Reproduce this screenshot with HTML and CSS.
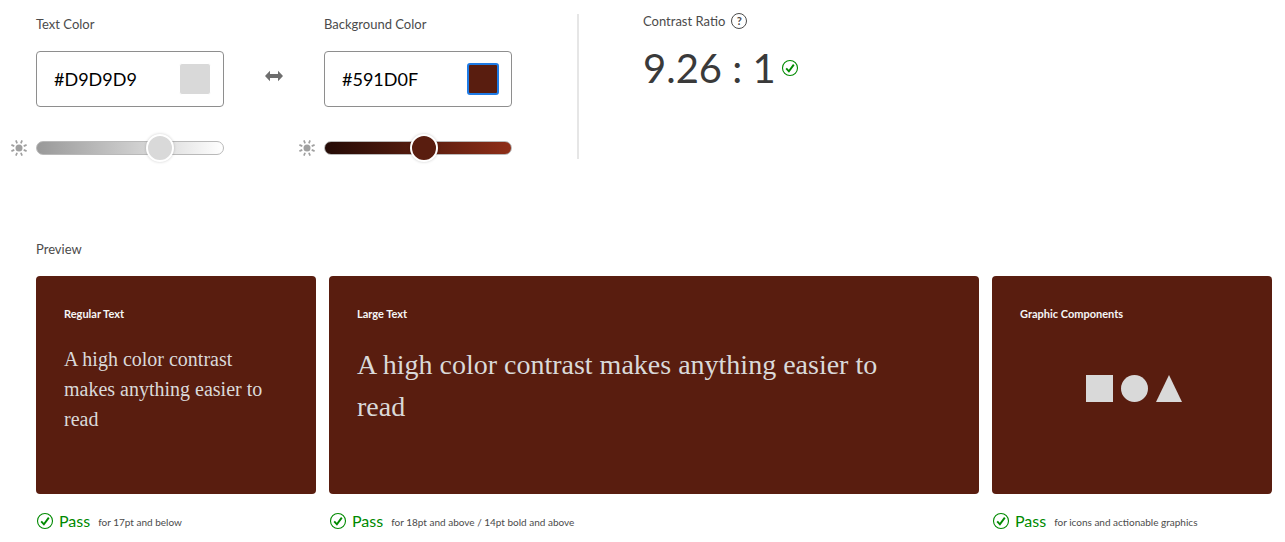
FILE: index.html
```html
<!DOCTYPE html>
<html lang="en">
<head>
<meta charset="utf-8">
<title>Contrast Checker</title>
<link rel="stylesheet" href="styles.css">
</head>
<body>
<svg class="defs" aria-hidden="true">
  <symbol id="check" viewBox="0 0 18 18">
    <circle cx="9" cy="9" r="7.5" fill="none" stroke="currentColor" stroke-width="1.1"/>
    <path d="M5.2 9.4 7.900 12.300 12.800 5.600" fill="none" stroke="currentColor" stroke-width="1.9"/>
  </symbol>
  <symbol id="sun" viewBox="0 0 16 16">
    <circle cx="8" cy="8" r="3.5" fill="currentColor"/>
    <path d="M9.900 3.300 11.100 .4M12.700 6.100 15.600 4.900M12.700 9.900 15.600 11.100M9.900 12.700 11.100 15.600M6.100 12.700 4.900 15.600M3.300 9.900 .4 11.100M3.300 6.100 .4 4.900M6.100 3.300 4.900 .4" fill="none" stroke="currentColor" stroke-width="1.7"/>
  </symbol>
</svg>
<main class="page">
  <section class="controls">
    <div class="picker">
      <label class="label" for="text-color">Text Color</label>
      <div class="field">
        <input class="hex" id="text-color" type="text" value="#D9D9D9">
        <button class="swatch swatch-text" type="button" aria-label="Pick text color"></button>
      </div>
      <svg class="sun" aria-hidden="true"><use href="#sun"/></svg>
      <input class="slider slider-text" type="range" min="0" max="100" value="69" aria-label="Text lightness">
    </div>
    <button class="swap" type="button" aria-label="Swap colors">
      <svg class="swap-icon" viewBox="0 0 18 12"><path d="M0 6 5 .8V4H13V.8L18 6 13 11.2V8H5V11.2Z" fill="#6e6e6e"/></svg>
    </button>
    <div class="picker">
      <label class="label" for="background-color">Background Color</label>
      <div class="field">
        <input class="hex" id="background-color" type="text" value="#591D0F">
        <button class="swatch swatch-background" type="button" aria-label="Pick background color"></button>
      </div>
      <svg class="sun" aria-hidden="true"><use href="#sun"/></svg>
      <input class="slider slider-background" type="range" min="0" max="100" value="54" aria-label="Background lightness">
    </div>
    <div class="result">
      <div class="result-head">
        <span>Contrast Ratio</span>
        <button class="help" type="button" aria-label="About contrast ratio">?</button>
      </div>
      <div class="ratio">9.26 : 1 <svg class="check" aria-hidden="true"><use href="#check"/></svg></div>
    </div>
  </section>

  <section class="preview">
    <h2 class="preview-title">Preview</h2>
    <div class="cards">
      <article>
        <div class="card">
          <h3 class="card-title">Regular Text</h3>
          <p class="sample">A high color contrast makes anything easier to read</p>
        </div>
        <div class="status"><svg class="check" aria-hidden="true"><use href="#check"/></svg><span class="pass">Pass</span><span class="note">for 17pt and below</span></div>
      </article>
      <article>
        <div class="card">
          <h3 class="card-title">Large Text</h3>
          <p class="sample sample-large">A high color contrast makes anything easier to read</p>
        </div>
        <div class="status"><svg class="check" aria-hidden="true"><use href="#check"/></svg><span class="pass">Pass</span><span class="note">for 18pt and above / 14pt bold and above</span></div>
      </article>
      <article>
        <div class="card">
          <h3 class="card-title">Graphic Components</h3>
          <svg class="shapes" viewBox="0 0 96 27" aria-hidden="true">
            <rect width="27" height="27"/><circle cx="48.500" cy="13.500" r="13.500"/><path d="M83 0 96 27H70Z"/>
          </svg>
        </div>
        <div class="status"><svg class="check" aria-hidden="true"><use href="#check"/></svg><span class="pass">Pass</span><span class="note">for icons and actionable graphics</span></div>
      </article>
    </div>
  </section>
</main>
</body>
</html>
```
FILE: styles.css
```css
:root {
  --text: #d9d9d9;
  --background: #591d0f;
}

* {
  box-sizing: border-box;
}

body {
  margin: 0;
  background: #fff;
  color: #4b4b4b;
  font: 13px/20px Lato, "Noto Sans", sans-serif;
}

button {
  padding: 0;
  border: 0;
  background: none;
  font: inherit;
  color: inherit;
}

.defs {
  position: absolute;
  width: 0;
  height: 0;
}

.page {
  padding: 14px 13px 0 11px;
}

.controls {
  display: flex;
  align-items: flex-start;
}

.picker {
  display: grid;
  grid-template-columns: 25px 188px;
}

.label,
.field {
  grid-column: 2;
}

.label {
  margin-bottom: 17px;
}

.field {
  display: flex;
  align-items: center;
  justify-content: space-between;
  height: 56px;
  margin-bottom: 27px;
  padding: 0 12px 0 17px;
  border: 1px solid #8e8e8e;
  border-radius: 4px;
}

.hex {
  width: 100px;
  padding: 0;
  border: 0;
  outline: 0;
  background: none;
  color: #000;
  font: 18px/24px Lato, "Noto Sans", sans-serif;
}

.swatch {
  width: 32px;
  height: 32px;
  border: 1px solid #fff;
  border-radius: 3px;
}

.swatch-text {
  background: var(--text);
}

.swatch-background {
  border: 2px solid #1e7be6;
  background: var(--background);
}

.sun {
  align-self: center;
  width: 16px;
  height: 16px;
  color: #a0a0a0;
}

.slider {
  appearance: none;
  width: 188px;
  height: 28px;
  margin: 0;
  background: none;
}

.slider::-webkit-slider-runnable-track {
  height: 14px;
  border: 1px solid #b9b9b9;
  border-radius: 7px;
}

.slider-text::-webkit-slider-runnable-track {
  background: linear-gradient(90deg, #999, #d9d9d9 64%, #fff);
}

.slider-background::-webkit-slider-runnable-track {
  background: linear-gradient(90deg, #240b06, var(--background) 53%, #8f2e18);
}

.slider::-webkit-slider-thumb {
  appearance: none;
  width: 28px;
  height: 28px;
  margin-top: -8px;
  border: 2px solid #fff;
  border-radius: 50%;
  box-shadow: 0 0 3px rgb(0 0 0 / 20%);
}

.slider-text::-webkit-slider-thumb {
  background: var(--text);
}

.slider-background::-webkit-slider-thumb {
  background: var(--background);
}

.swap {
  display: flex;
  width: 75px;
  margin-top: 56px;
  padding-left: 41px;
}

.swap-icon {
  width: 18px;
  height: 12px;
}

.result {
  min-height: 145px;
  margin-left: 65px;
  padding-left: 64px;
  border-left: 2px solid #e6e6e6;
}

.result-head {
  display: flex;
  align-items: center;
  gap: 6px;
  height: 14px;
}

.help {
  width: 16px;
  height: 16px;
  border: 1px solid #4b4b4b;
  border-radius: 50%;
  font-size: 11px;
  font-weight: 700;
  line-height: 14px;
}

.ratio {
  display: flex;
  align-items: center;
  gap: 5px;
  margin-top: 10px;
  color: #3a3a3a;
  font-size: 40px;
  line-height: 60px;
}

.check {
  flex: none;
  width: 18px;
  height: 18px;
  color: #008a00;
}

.preview {
  padding: 77px 0 0 25px;
}

.preview-title {
  margin: 0;
  font-size: 13px;
  font-weight: 400;
}

.cards {
  display: grid;
  grid-template-columns: 280px 1fr 280px;
  gap: 13px;
  margin-top: 17px;
}

.card {
  min-height: 218px;
  padding: 28px;
  border-radius: 4px;
  background: var(--background);
  color: var(--text);
}

.card-title {
  margin: 0;
  color: #f5f5f5;
  font-size: 11px;
  font-weight: 700;
}

.sample {
  margin: 20px 0 0;
  font: 20px/30px "Liberation Serif", serif;
}

.sample-large {
  max-width: 560px;
  font-size: 28px;
  line-height: 42px;
}

.shapes {
  display: block;
  width: 96px;
  height: 27px;
  margin: 51px auto 0 66px;
  fill: var(--text);
}

.status {
  display: flex;
  align-items: center;
  margin-top: 16px;
}

.pass {
  margin: 0 8px 0 5px;
  color: #008a00;
  font-size: 16px;
}

.note {
  padding-top: 2px;
  font-size: 10px;
}
```
